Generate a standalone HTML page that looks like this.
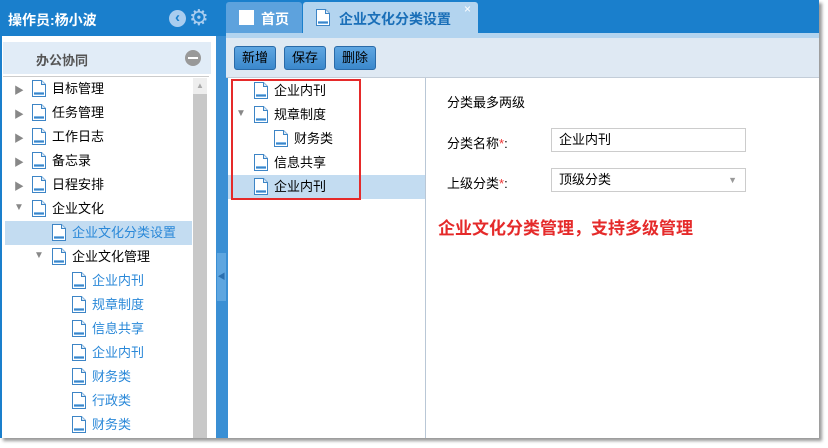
<!DOCTYPE html>
<html><head><meta charset="utf-8"><style>
*{margin:0;padding:0;box-sizing:border-box}
body{width:828px;height:448px;background:#fff;font-family:"Liberation Sans","Noto Sans CJK SC",sans-serif;font-size:13px;color:#000;position:relative;overflow:hidden}
.app{position:absolute;left:0;top:0;width:819px;height:438px;background:#1a7fcc;box-shadow:3px 3px 3px #999}
.abs{position:absolute}
.doc{position:absolute;width:14px;height:17px}
.row{position:absolute;height:24px;line-height:24px;white-space:nowrap}
.btn{position:absolute;top:46px;height:24px;line-height:22px;border:1px solid #2a6aa8;border-radius:3px;background:linear-gradient(#5fa6e2,#3b88cc);color:#000;font-size:13px;text-align:center}
.lbl{position:absolute;font-size:13px}
.red{color:#e33}
</style></head><body>
<svg width="0" height="0" style="position:absolute"><defs>
<symbol id="d" viewBox="0 0 14 17"><path d="M0.5 0.5H9.5L13.5 4.5V16.5H0.5Z" fill="#fff" stroke="#3d85c6"/><path d="M9.5 0.5V4.5H13.5" fill="#dbe9f6" stroke="#3d85c6"/><rect x="2" y="12" width="10" height="3" fill="#7cb6e8"/><rect x="2" y="13" width="10" height="1" fill="#3d85c6"/></symbol>
</defs></svg>
<div class="app">
 <div class="abs" style="left:8px;top:10px;color:#fff;font-weight:bold;font-size:14px">操作员:杨小波</div>
 <div class="abs" style="left:169px;top:10px;width:17px;height:17px;border-radius:50%;background:#a9cdef;color:#1a7fcc;font-weight:bold;font-size:15px;line-height:15px;text-align:center">‹</div>
 <div class="abs" style="left:189px;top:6px;color:#a9cdef;font-size:22px;line-height:24px">⚙</div>
 <div class="abs" style="left:0;top:36px;width:216px;height:402px;background:#fff;border-left:2px solid #1a7fcc"></div>
 <div class="abs" style="left:3px;top:42px;width:208px;height:32px;background:#e1ecf7"></div>
 <div class="abs" style="left:36px;top:50px;font-weight:bold;color:#555;font-size:13px">办公协同</div>
 <div class="abs" style="left:185px;top:50px;width:16px;height:16px;border-radius:50%;background:#999"><div style="position:absolute;left:3px;top:7px;width:10px;height:2px;background:#fff"></div></div>
 <div class="abs" style="left:3px;top:76px;width:206px;height:1px;background:#ccc"></div>
 <div class="abs" style="left:193px;top:78px;width:14px;height:360px;background:#c8c8c8"></div>
 <div class="abs" style="left:193px;top:78px;width:14px;height:16px;background:#eee;color:#aaa;font-size:8px;text-align:center;line-height:16px">▲</div>
 <div class="abs" style="left:5px;top:221px;width:187px;height:24px;background:#c3dcf1"></div>
 <div id="lt"></div>
 <div class="abs" style="left:216px;top:36px;width:12px;height:402px;background:#3a8fd4"></div>
 <div class="abs" style="left:217px;top:253px;width:9px;height:48px;background:#5ea6e0;color:#2a70b0;font-size:8px;line-height:48px;text-align:center">◀</div>
 <div class="abs" style="left:226px;top:2px;width:76px;height:31px;background:#5da2dd;border-radius:3px 3px 0 0"></div>
 <div class="abs" style="left:239px;top:10px;width:15px;height:15px;background:#fff"></div>
 <div class="abs" style="left:261px;top:9px;color:#fff;font-weight:bold;font-size:14px">首页</div>
 <div class="abs" style="left:303px;top:2px;width:175px;height:31px;background:#b3d4ef;border-radius:3px 3px 0 0"></div>
 <svg class="doc" style="left:316px;top:9px"><use href="#d"/></svg>
 <div class="abs" style="left:339px;top:9px;color:#1a6fb8;font-weight:bold;font-size:14px">企业文化分类设置</div>
 <div class="abs" style="left:464px;top:2px;color:#fff;font-size:12px">×</div>
 <div class="abs" style="left:226px;top:33px;width:593px;height:5px;background:#b3d4ef"></div>
 <div class="abs" style="left:226px;top:38px;width:593px;height:40px;background:#dfe9f3;border-bottom:1px solid #c3cdd8"></div>
 <div class="btn" style="left:234px;width:42px">新增</div>
 <div class="btn" style="left:284px;width:42px">保存</div>
 <div class="btn" style="left:334px;width:42px">删除</div>
 <div class="abs" style="left:228px;top:78px;width:591px;height:360px;background:#fff"></div>
 <div class="abs" style="left:425px;top:78px;width:1px;height:360px;background:#b9c7d6"></div>
 <div class="abs" style="left:228px;top:175px;width:197px;height:24px;background:#c3dcf1"></div>
 <div id="rt"></div>
 <div class="abs" style="left:231px;top:79px;width:130px;height:121px;border:2px solid #e52a2a"></div>
 <div class="lbl" style="left:447px;top:92px">分类最多两级</div>
 <div class="lbl" style="left:447px;top:133px">分类名称<span class="red">*</span>:</div>
 <div class="abs" style="left:551px;top:128px;width:195px;height:24px;border:1px solid #ccc;line-height:22px;padding-left:7px">企业内刊</div>
 <div class="lbl" style="left:447px;top:173px">上级分类<span class="red">*</span>:</div>
 <div class="abs" style="left:551px;top:168px;width:195px;height:24px;border:1px solid #ccc;line-height:22px;padding-left:7px">顶级分类<span style="position:absolute;right:8px;top:0;color:#999;font-size:9px">▼</span></div>
 <div class="abs" style="left:438px;top:214px;color:#e52a2a;font-weight:bold;font-size:17px">企业文化分类管理，支持多级管理</div>
</div>
<script>
function add(id,items){var h='';items.forEach(function(it){var x=it[0],y=it[1],t=it[2],a=it[3],c=it[4]||'#000';
if(a)h+='<div class="abs" style="left:'+(x-18)+'px;top:'+(y-7)+'px;color:#888;font-size:10px">'+a+'</div>';
h+='<svg class="doc" style="left:'+x+'px;top:'+(y-9)+'px"><use href="#d"/></svg>';
h+='<div class="row" style="left:'+(x+20)+'px;top:'+(y-12)+'px;color:'+c+'">'+t+'</div>';});
document.getElementById(id).outerHTML=h;}
var b='#2a88d8';
add('lt',[[32,89,'目标管理','▶'],[32,113,'任务管理','▶'],[32,137,'工作日志','▶'],[32,161,'备忘录','▶'],[32,185,'日程安排','▶'],[32,209,'企业文化','▼'],
[52,233,'企业文化分类设置',0,b],[52,257,'企业文化管理','▼'],[72,281,'企业内刊',0,b],[72,305,'规章制度',0,b],[72,329,'信息共享',0,b],[72,353,'企业内刊',0,b],[72,377,'财务类',0,b],[72,401,'行政类',0,b],[72,425,'财务类',0,b]]);
add('rt',[[254,91,'企业内刊'],[254,115,'规章制度','▼'],[274,139,'财务类'],[254,163,'信息共享'],[254,187,'企业内刊']]);
</script>
</body></html>
